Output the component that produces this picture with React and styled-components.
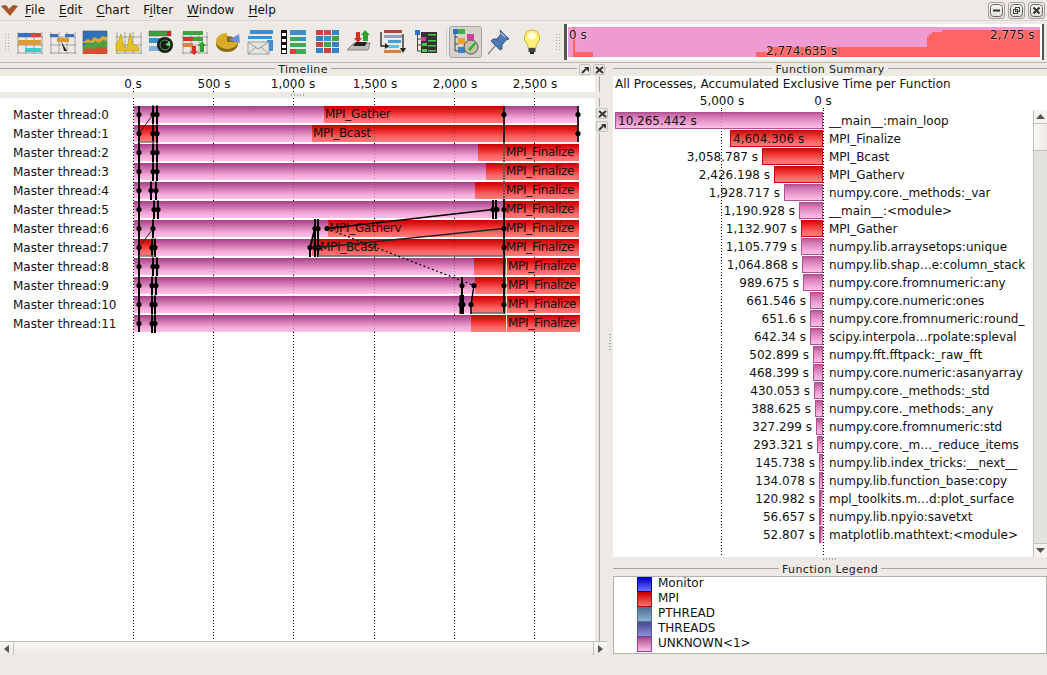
import { createGlobalStyle, styled } from "styled-components";

const Global = createGlobalStyle`
  html, body { margin: 0; padding: 0; background: #edeae5; }
  body { font-family: "DejaVu Sans", sans-serif; font-size: 12px; color: #111; }
`;

const Screen = styled.div`
  width: 1047px;
  height: 675px;
  overflow: hidden;
  display: flex;
  flex-direction: column;
  background: #edeae5;
`;

const MenuBar = styled.div`
  height: 20px;
  display: flex;
  align-items: center;
  padding-left: 1px;
  flex: none;
`;

const Logo = styled.svg`
  margin-right: 6px;
  flex: none;
`;

const MenuItem = styled.span`
  margin-right: 14px;
  font-size: 12px;
  u { text-underline-offset: 2px; }
`;

const WinButtons = styled.div`
  margin-left: auto;
  margin-right: 2px;
  display: flex;
  gap: 3px;
`;

const WinButton = styled.div`
  width: 17px;
  height: 17px;
  box-sizing: border-box;
  border: 1px solid #a5a29c;
  border-radius: 3px;
  background: linear-gradient(#f7f6f3, #e0ddd7);
  display: flex;
  align-items: center;
  justify-content: center;
`;

const ToolBar = styled.div`
  height: 43px;
  flex: none;
  display: flex;
  align-items: center;
  padding-left: 3px;
  box-sizing: border-box;
  border-top: 1px solid #dad7d1;
  border-bottom: 1px solid #b9b6b0;
`;

const Grip = styled.div`
  width: 6px;
  height: 18px;
  margin: 0 ${(p) => p.$after}px 0 ${(p) => p.$before}px;
  flex: none;
  background-image: radial-gradient(circle, #aaa 0.7px, transparent 0.8px);
  background-size: 3px 3px;
`;

const ToolSlot = styled.div`
  width: 33px;
  height: 32px;
  flex: none;
  display: flex;
  align-items: center;
  justify-content: center;
  box-sizing: border-box;
  ${(p) =>
    p.$active &&
    `background: #d6d3cd; border: 1px solid #a9a6a0; border-radius: 3px;`}
`;

const ToolDivider = styled.div`
  width: 1px;
  height: 26px;
  background: #cfccc6;
  margin: 0 2px 0 4px;
`;

const Overview = styled.div`
  width: 480px;
  height: 36px;
  margin: 0 3px 0 auto;
  box-sizing: border-box;
  background: #fff;
  border-left: 3px solid #555;
  border-right: 2px solid #555;
  padding: 3px 2px 3px 1px;
  flex: none;
`;

const OverviewInner = styled.div`
  position: relative;
  height: 100%;
  overflow: hidden;
`;

const OverviewChart = styled.svg`
  display: block;
`;

const OverviewLabel = styled.span`
  position: absolute;
  font-size: 12px;
  white-space: nowrap;
  color: #111;
  text-shadow: 0 0 2px #fff;
  left: ${(p) => p.$left}px;
  top: ${(p) => p.$top}px;
`;

const Panes = styled.div`
  flex: 1;
  display: flex;
  min-height: 0;
`;

const LeftPane = styled.div`
  width: 613px;
  flex: none;
  display: flex;
  flex-direction: column;
`;

const TitleRow = styled.div`
  height: 13px;
  flex: none;
  display: flex;
  align-items: flex-start;
  font-size: 11px;
  letter-spacing: 0.35px;
  color: #222;
  position: relative;
  margin-right: ${(p) => p.$inset || 0}px;
  &::before, &::after {
    content: "";
    flex: 1;
    border-top: 1px solid #a8a5a0;
    margin-top: 5px;
  }
  span { padding: 1px 3px 0; line-height: 12px; }
`;

const DockRow = styled.div`
  position: absolute;
  right: 1px;
  top: 1px;
  display: flex;
  gap: 2px;
  padding-left: 2px;
  background: #edeae5;
`;

const DockButton = styled.div`
  width: 12px;
  height: 11px;
  box-sizing: border-box;
  border: 1px solid #c2bfb9;
  border-radius: 2px;
  background: #edeae5;
  display: flex;
  align-items: center;
  justify-content: center;
`;

const TimelineBody = styled.div`
  height: 565px;
  flex: none;
  display: flex;
`;

const TimelineMain = styled.div`
  width: 595px;
  flex: none;
  display: flex;
  flex-direction: column;
  min-height: 0;
`;

const AxisStrip = styled.div`
  height: 16px;
  background: #fff;
  position: relative;
  flex: none;
`;

const AxisLabel = styled.span`
  position: absolute;
  top: ${(p) => p.$top ?? 1}px;
  transform: translateX(-50%);
  left: ${(p) => p.$x}px;
  white-space: nowrap;
  font-size: 12px;
`;

const AxisGap = styled.div`
  height: 6px;
  flex: none;
  display: flex;
  align-items: center;
  justify-content: center;
`;

const GripRow = styled.div`
  width: 16px;
  height: 2px;
  background-image: radial-gradient(circle, #aaa 0.6px, transparent 0.7px);
  background-size: 3px 2px;
`;

const Chart = styled.div`
  flex: 1;
  background: #fff;
  position: relative;
  min-height: 0;
`;

const ChartLines = styled.svg`
  position: absolute;
  left: 0;
  top: 0;
  pointer-events: none;
`;

const ThreadList = styled.div`
  position: absolute;
  inset: 0;
  padding-top: 8px;
  display: flex;
  flex-direction: column;
`;

const ThreadRow = styled.div`
  height: 19px;
  flex: none;
  display: flex;
`;

const ThreadName = styled.div`
  padding-left: 13px;
  width: 121px;
  flex: none;
  font-size: 12px;
  line-height: 19px;
  white-space: nowrap;
`;

const Track = styled.div`
  height: 17px;
  display: flex;
  flex: none;
`;

const Segment = styled.div`
  width: ${(p) => p.$w}px;
  flex: none;
  font-size: 12px;
  letter-spacing: -0.3px;
  line-height: 17px;
  padding-left: ${(p) => p.$pad || 0}px;
  box-sizing: border-box;
  overflow: hidden;
  white-space: nowrap;
  ${(p) => p.$split && "border-left: 1px solid #ffd8d8;"}
  background: ${(p) =>
    p.$mpi
      ? "linear-gradient(#c80000 0%, #e42020 30%, #ff6464 72%, #ff7a7a 100%)"
      : "linear-gradient(#a83f88 0%, #c76aa8 30%, #f4a8d8 72%, #ffc0e8 100%)"};
`;

const HBar = styled.div`
  width: 607px;
  height: 14px;
  flex: none;
  display: flex;
  box-sizing: border-box;
  background: linear-gradient(#f8f7f5, #edeae5);
  border-top: 1px solid #bdbdbb;
`;

const ScrollEnd = styled.div`
  width: 13px;
  flex: none;
  display: flex;
  align-items: center;
  justify-content: center;
  ${(p) =>
    p.$right
      ? "margin-left: auto; border-left: 1px solid #c4c1bb;"
      : "border-right: 1px solid #c4c1bb;"}
`;

const Rail = styled.div`
  flex: 1;
  position: relative;
  display: flex;
  flex-direction: column;
  align-items: flex-start;
  padding-left: 1px;
`;

const RailLine = styled.div`
  margin-left: 3px;
  width: 1px;
  background: #a8a5a0;
  height: ${(p) => (p.$h ? `${p.$h}px` : "auto")};
  margin-top: ${(p) => p.$gap || 0}px;
  flex: ${(p) => (p.$h ? "none" : 1)};
`;

const RailButtons = styled.div`
  display: flex;
  flex-direction: column;
  gap: 2px;
  margin-top: 1px;
`;

const RailGrip = styled.div`
  position: absolute;
  left: 14px;
  top: 257px;
  width: 2px;
  height: 17px;
  background-image: radial-gradient(circle, #aaa 0.6px, transparent 0.7px);
  background-size: 2px 3px;
`;

const RightPane = styled.div`
  flex: 1;
  display: flex;
  flex-direction: column;
  min-width: 0;
`;

const Summary = styled.div`
  height: 481px;
  flex: none;
  display: flex;
  flex-direction: column;
`;

const SummaryCaption = styled.div`
  height: 16px;
  flex: none;
  background: #fff;
  font-size: 12px;
  line-height: 16px;
  padding-left: 2px;
  white-space: nowrap;
`;

const SummaryAxis = styled.div`
  height: 18px;
  flex: none;
  background: #fff;
  position: relative;
`;

const SummaryBody = styled.div`
  flex: 1;
  display: flex;
  min-height: 0;
`;

const FuncChart = styled.div`
  flex: 1;
  background: #fff;
  position: relative;
  min-width: 0;
`;

const AxisDots = styled.div`
  position: absolute;
  left: ${(p) => p.$x}px;
  top: ${(p) => p.$top ?? 0}px;
  bottom: 0;
  width: 1px;
  opacity: ${(p) => p.$alpha ?? 1};
  background-image: linear-gradient(#000 50%, transparent 50%);
  background-size: 1px 3px;
`;

const FuncList = styled.div`
  position: absolute;
  inset: 0;
  padding-top: 2px;
  display: flex;
  flex-direction: column;
`;

const FuncRow = styled.div`
  height: 18px;
  flex: none;
  display: flex;
  align-items: flex-start;
`;

const FuncValueSide = styled.div`
  width: 210px;
  flex: none;
  display: flex;
  justify-content: flex-end;
  height: 17px;
  gap: 4px;
  white-space: nowrap;
  font-size: 12px;
  line-height: 19px;
`;

const FuncBar = styled.div`
  height: 17px;
  width: ${(p) => p.$w}px;
  box-sizing: border-box;
  flex: none;
  border: 1px solid ${(p) => (p.$mpi ? "#c80808" : "#b0508f")};
  border-width: ${(p) => (p.$w < 3 ? "0 0 0 2px" : "1px")};
  font-size: 12px;
  line-height: 17px;
  padding-left: 2px;
  overflow: hidden;
  background: ${(p) =>
    p.$mpi
      ? "linear-gradient(#d80808 0%, #ee3030 30%, #ff6a6a 75%, #ff7a7a 100%)"
      : "linear-gradient(#bb5a9c 0%, #d680b8 30%, #f4a8d8 75%, #ffc0e8 100%)"};
`;

const FuncName = styled.div`
  margin-left: 6px;
  font-size: 12px;
  line-height: 19px;
  white-space: nowrap;
`;

const VScroll = styled.div`
  width: 14px;
  flex: none;
  display: flex;
  flex-direction: column;
  background: #e4e2de;
  border-left: 1px solid #c4c1bb;
  box-sizing: border-box;
`;

const ScrollBtn = styled.div`
  height: 13px;
  flex: none;
  display: flex;
  align-items: center;
  justify-content: center;
  background: #f4f3f0;
  ${(p) =>
    p.$top
      ? "border-bottom: 1px solid #c4c1bb;"
      : "border-top: 1px solid #c4c1bb; margin-top: auto;"}
`;

const ScrollThumb = styled.div`
  height: 26px;
  flex: none;
  border-bottom: 1px solid #c4c1bb;
  background: linear-gradient(90deg, #f8f7f5, #edeae5);
`;

const SplitGap = styled.div`
  height: 6px;
  flex: none;
  display: flex;
  justify-content: center;
  align-items: flex-start;
  padding-top: 1px;
  box-sizing: border-box;
`;

const LegendBox = styled.div`
  height: 78px;
  background: #fff;
  border: 1px solid #b5b2ac;
  box-sizing: border-box;
  padding-left: 23px;
  flex: none;
`;

const LegendRow = styled.div`
  height: 15px;
  display: flex;
  font-size: 12px;
  line-height: 13px;
`;

const Swatch = styled.div`
  width: 15px;
  height: 15px;
  box-sizing: border-box;
  border: 1px solid ${(p) => p.$edge};
  background: ${(p) => p.$bg};
  margin-right: 6px;
`;

const FIN = [74, true, "MPI_Finalize", 1];
const FIN2 = [74, true, "MPI_Finalize", 1, true];

const THREADS = [
  [[190, false], [180, true, "MPI_Gather", 1], [74, false]],
  [[6, false], [16, true], [156, false], [266, true, "MPI_Bcast", 1]],
  [[344, false], [27, true], FIN],
  [[352, false], [19, true], FIN],
  [[341, false], [30, true], FIN],
  [[371, false], FIN],
  [[194, false], [177, true, "MPI_Gatherv", 1], FIN],
  [[6, false], [16, true], [156, false], [193, true, "MPI_Bcast", 8], FIN],
  [[340, false], [32, true], FIN2],
  [[341, false], [31, true], FIN2],
  [[337, false], [35, true], FIN2],
  [[337, false], [35, true], FIN2],
];

const FUNCS = [
  ["10,265.442 s", 208, false, "__main__:main_loop", true],
  ["4,604.306 s", 93, true, "MPI_Finalize", true],
  ["3,058.787 s", 61, true, "MPI_Bcast"],
  ["2,426.198 s", 49, true, "MPI_Gatherv"],
  ["1,928.717 s", 39, false, "numpy.core._methods:_var"],
  ["1,190.928 s", 24, false, "__main__:<module>"],
  ["1,132.907 s", 22, true, "MPI_Gather"],
  ["1,105.779 s", 22, false, "numpy.lib.arraysetops:unique"],
  ["1,064.868 s", 21, false, "numpy.lib.shap…e:column_stack"],
  ["989.675 s", 20, false, "numpy.core.fromnumeric:any"],
  ["661.546 s", 13, false, "numpy.core.numeric:ones"],
  ["651.6 s", 13, false, "numpy.core.fromnumeric:round_"],
  ["642.34 s", 13, false, "scipy.interpola…rpolate:spleval"],
  ["502.899 s", 10, false, "numpy.fft.fftpack:_raw_fft"],
  ["468.399 s", 10, false, "numpy.core.numeric:asanyarray"],
  ["430.053 s", 9, false, "numpy.core._methods:_std"],
  ["388.625 s", 8, false, "numpy.core._methods:_any"],
  ["327.299 s", 7, false, "numpy.core.fromnumeric:std"],
  ["293.321 s", 6, false, "numpy.core._m…_reduce_items"],
  ["145.738 s", 3, false, "numpy.lib.index_tricks:__next__"],
  ["134.078 s", 3, false, "numpy.lib.function_base:copy"],
  ["120.982 s", 2, false, "mpl_toolkits.m…d:plot_surface"],
  ["56.657 s", 2, false, "numpy.lib.npyio:savetxt"],
  ["52.807 s", 2, false, "matplotlib.mathtext:<module>"],
];

const LEGEND = [
  ["Monitor", "linear-gradient(#0000c8, #7070ff)", "#0000b0"],
  ["MPI", "linear-gradient(#d00000, #ff7070)", "#c00000"],
  ["PTHREAD", "linear-gradient(#4f7290, #8cb0d8)", "#56708c"],
  ["THREADS", "linear-gradient(#484c94, #8c90e0)", "#505490"],
  ["UNKNOWN<1>", "linear-gradient(#b0508f, #ffc0e8)", "#a83f88"],
];

// label, label centre, tick x
const AXIS = [
  ["0 s", 133, 133],
  ["500 s", 214, 213],
  ["1,000 s", 293, 293],
  ["1,500 s", 375, 374],
  ["2,000 s", 455, 454],
  ["2,500 s", 535, 534],
];

const rowY = (i) => 16.5 + i * 19;

// x of the black state lines near the start of each thread
const START_MARKS = [
  [153, 157], [153, 157], [153, 157], [153, 157], [151, 156], [154, 158],
  [153], [152, 155], [153, 157], [152, 156], [152, 155], [152, 155],
];

const Dot = ({ x, i }) => <circle cx={x} cy={rowY(i)} r="2.6" fill="#000" />;

const VLine = ({ x, i, w = 2 }) => (
  <line x1={x} y1={rowY(i) - 9} x2={x} y2={rowY(i) + 9.5} stroke="#000" strokeWidth={w} />
);

function TimelineLines() {
  return (
    <ChartLines width="595" height="545">
      {AXIS.map(([t, , x]) => (
        <line key={t} x1={x + 0.5} y1="8" x2={x + 0.5} y2="234" stroke="#000" strokeOpacity=".25" strokeDasharray="1 2" />
      ))}
      <line x1="139" y1="8" x2="139" y2="234" stroke="#000" strokeWidth="2" />
      {START_MARKS.map((xs, i) =>
        xs.map((x) => <VLine key={`${i}-${x}`} x={x} i={i} />)
      )}
      {START_MARKS.map((xs, i) => [
        <Dot key={`s${i}`} x={139} i={i} />,
        ...xs.map((x) => <Dot key={`d${i}-${x}`} x={x} i={i} />),
      ])}
      <line x1="139" y1={rowY(1)} x2="153" y2={rowY(0)} stroke="#222" strokeWidth="1" />
      <line x1="139" y1={rowY(7)} x2="153" y2={rowY(6)} stroke="#222" strokeWidth="1" />
      <line x1="139" y1="44" x2="155" y2="44" stroke="#777" strokeWidth="1.5" />
      <line x1="139" y1="158" x2="155" y2="158" stroke="#777" strokeWidth="1.5" />

      <line x1="504" y1="8" x2="504" y2="44" stroke="#222" strokeWidth="2" />
      <line x1="504" y1="44" x2="504" y2="101" stroke="#555" strokeWidth="2" strokeDasharray="2 1" />
      <line x1="504" y1="101" x2="504" y2="216" stroke="#111" strokeWidth="2" />
      <line x1="578" y1="8" x2="578" y2="44" stroke="#222" strokeWidth="2" />
      <Dot x={504} i={0} />
      <Dot x={578} i={0} />
      <Dot x={578} i={1} />

      <line x1="327" y1={rowY(6)} x2="493" y2={rowY(5)} stroke="#000" strokeWidth="1.5" />
      <Dot x={327} i={6} />
      <line x1="493" y1="102" x2="493" y2="121" stroke="#000" strokeWidth="2" />
      <line x1="496" y1="102" x2="496" y2="121" stroke="#000" strokeWidth="2" />
      <Dot x={493} i={5} />
      <Dot x={497} i={5} />
      <Dot x={504} i={5} />

      <line x1="315" y1="121" x2="315" y2="159" stroke="#000" strokeWidth="2" />
      <line x1="318" y1="121" x2="318" y2="159" stroke="#000" strokeWidth="2" />
      <line x1="310" y1="159" x2="310" y2={rowY(7)} stroke="#000" strokeWidth="2" />
      <line x1="310" y1={rowY(7)} x2="315" y2={rowY(6)} stroke="#000" strokeWidth="2" />
      <Dot x={315} i={6} />
      <Dot x={318} i={6} />
      <Dot x={310} i={7} />
      <Dot x={315} i={7} />
      <Dot x={319} i={7} />
      <line x1="318" y1={rowY(7)} x2="504" y2={rowY(6)} stroke="#222" strokeWidth="1.5" />
      <line x1="318" y1="158" x2="504" y2="158" stroke="#666" strokeWidth="1.5" />
      <Dot x={504} i={6} />
      <Dot x={504} i={7} />

      <line x1="327" y1={rowY(6)} x2="474" y2={rowY(9)} stroke="#000" strokeWidth="1.2" strokeDasharray="2 2.5" />
      <line x1="462" y1="179" x2="462" y2="197" stroke="#000" strokeWidth="2" />
      <line x1="461" y1="197" x2="461" y2="216" stroke="#000" strokeWidth="3" />
      <line x1="463" y1="197" x2="463" y2="216" stroke="#000" strokeWidth="2" />
      <line x1="471" y1={rowY(10)} x2="474" y2={rowY(9)} stroke="#000" strokeWidth="1.5" />
      <line x1="471" y1="215" x2="504" y2="215" stroke="#666" strokeWidth="1.5" />
      <line x1="471" y1={rowY(10)} x2="471" y2="216" stroke="#000" strokeWidth="1.5" />
      <Dot x={462} i={9} />
      <Dot x={474} i={9} />
      <Dot x={504} i={9} />
      <Dot x={461} i={10} />
      <Dot x={463} i={10} />
      <Dot x={471} i={10} />
      <Dot x={504} i={10} />
    </ChartLines>
  );
}

function ToolIcon({ kind }) {
  // each toolbar icon is a small hand drawn chart glyph
  const grid = (
    <path d="M2 3v22M10 3v22M18 3v22M26 3v22M1 8h26M1 16h26M1 24h26" stroke="#777" strokeWidth=".6" fill="none" />
  );
  switch (kind) {
    case "gantt":
      return (
        <svg width="27" height="26" viewBox="0 0 27 26">
          {grid}
          <rect x="2" y="4" width="14" height="4" fill="#3a6fc0" />
          <rect x="15" y="4" width="10" height="4" fill="#d84040" />
          <rect x="2" y="11" width="23" height="5" fill="#d89c38" />
          <rect x="9" y="19" width="16" height="4" fill="#40c8c8" />
        </svg>
      );
    case "cursor":
      return (
        <svg width="27" height="26" viewBox="0 0 27 26">
          {grid}
          <rect x="1" y="5" width="8" height="3" fill="#3a6fc0" />
          <rect x="16" y="5" width="9" height="3" fill="#3a6fc0" />
          <rect x="8" y="9" width="12" height="4" fill="#d89a30" />
          <path d="M12 12l6 10h-3l-1-4z" fill="#222" />
        </svg>
      );
    case "stack":
      return (
        <svg width="27" height="26" viewBox="0 0 27 26">
          <rect x="1" y="2" width="24" height="22" fill="#2f70b8" stroke="#555" strokeWidth=".6" />
          <path d="M1 13l5-3 3 2 3-4 5 2 3-3 5 1v6H1z" fill="#d8a838" />
          <path d="M1 18l5-5 4 2 3-3 4 2 4-3 4 1v11H1z" fill="#50a040" />
          <path d="M1 21l6-2 5 1 5-2 8 1v6H1z" fill="#d84f30" />
        </svg>
      );
    case "peak":
      return (
        <svg width="27" height="26" viewBox="0 0 27 26">
          {grid}
          <path d="M1 22V14l3-3 2-6 3 13 3 1 3-15 3 11 3 1 3 3v3z" fill="#e4c020" stroke="#a08810" strokeWidth=".5" />
        </svg>
      );
    case "radar":
      return (
        <svg width="27" height="26" viewBox="0 0 27 26">
          <rect x="1" y="2" width="22" height="5" fill="#40a040" stroke="#555" strokeWidth=".5" />
          <rect x="19" y="2" width="4" height="5" fill="#d82020" />
          <rect x="1" y="9" width="14" height="5" fill="#3a8fd0" />
          <rect x="1" y="17" width="12" height="5" fill="#80b0e0" />
          <circle cx="17" cy="16" r="8" fill="#1a1a1a" />
          <circle cx="17" cy="16" r="5" fill="none" stroke="#60c060" strokeWidth=".8" />
          <path d="M17 16l5-4v5z" fill="#70e070" />
        </svg>
      );
    case "updown":
      return (
        <svg width="27" height="26" viewBox="0 0 27 26">
          {grid}
          <rect x="2" y="2" width="20" height="4" fill="#40a040" />
          <rect x="2" y="8" width="12" height="4" fill="#d83030" />
          <rect x="12" y="8" width="10" height="4" fill="#40a040" />
          <rect x="2" y="14" width="10" height="4" fill="#d88040" />
          <path d="M11 17h4v5h2l-4 4-4-4h2z" fill="#d83020" />
          <path d="M21 12l4 5h-2v6h-4v-6h-2z" fill="#30a030" />
        </svg>
      );
    case "pie":
      return (
        <svg width="26" height="22" viewBox="0 0 26 22">
          <ellipse cx="12" cy="13" rx="11" ry="8" fill="#8a6a10" />
          <path d="M12 3a11 8 0 1 0 11 9l-11 0z" fill="#d8ac28" transform="translate(0 -1)" />
          <path d="M14 9l10-6 1 9z" fill="#6a8fe0" />
        </svg>
      );
    case "mail":
      return (
        <svg width="27" height="26" viewBox="0 0 27 26">
          <rect x="3" y="1" width="23" height="4" fill="#3a90d8" />
          <rect x="1" y="7" width="24" height="3" fill="#3a90d8" />
          <rect x="20" y="11" width="6" height="11" fill="#3a90d8" />
          <rect x="1" y="13" width="21" height="12" fill="#e4e4e2" stroke="#888" strokeWidth=".7" />
          <path d="M1 13l10 7 11-7M1 25l8-7M22 25l-8-7" fill="none" stroke="#888" strokeWidth=".8" />
        </svg>
      );
    case "filmgrid":
      return (
        <svg width="27" height="26" viewBox="0 0 27 26">
          <rect x="1" y="1" width="6" height="24" fill="#111" />
          <path d="M2 4h4v3H2zM2 10h4v3H2zM2 16h4v3H2zM2 21h4v3H2z" fill="#fff" />
          <rect x="10" y="1" width="16" height="5" fill="#3a90c8" />
          <rect x="10" y="8" width="10" height="4" fill="#40a858" />
          <rect x="20" y="8" width="6" height="4" fill="#3a90c8" />
          <rect x="10" y="14" width="16" height="4" fill="#40a858" />
          <rect x="10" y="20" width="6" height="5" fill="#d84040" />
          <rect x="16" y="20" width="10" height="5" fill="#40a858" />
        </svg>
      );
    case "matrix":
      return (
        <svg width="24" height="24" viewBox="0 0 24 24">
          {["#d04040", "#c05050", "#3a80c8", "#3a80c8", "#3a90c8", "#40a050", "#c04848", "#40a858", "#3a80c8", "#3a80c8", "#c84040", "#3a80c8"].map((c, i) => (
            <rect key={i} x={(i % 3) * 8 + 1} y={Math.floor(i / 3) * 6 + 0} width="7" height="5" fill={c} />
          ))}
        </svg>
      );
    case "export":
      return (
        <svg width="27" height="26" viewBox="0 0 27 26">
          <path d="M1 21l7-7h16l-2 7z" fill="#bbb" stroke="#666" strokeWidth=".7" />
          <path d="M7 17l3-4h11l-2 4z" fill="#222" />
          <path d="M10 3h4v6h2l-4 5-4-5h2z" fill="#d83020" />
          <path d="M19 1l5 5h-2v6h-5V6h-2z" fill="#30a030" />
        </svg>
      );
    case "flow":
      return (
        <svg width="27" height="26" viewBox="0 0 27 26">
          <rect x="5" y="1" width="18" height="3" fill="#b84040" />
          <rect x="5" y="6" width="18" height="3" fill="#90a0b8" />
          <rect x="9" y="11" width="13" height="3" fill="#40a0d0" />
          <rect x="8" y="16" width="12" height="3" fill="#60c0d8" />
          <rect x="5" y="21" width="17" height="3" fill="#d88040" />
          <path d="M2 3v14h5M24 5v16" fill="none" stroke="#222" strokeWidth="1.3" />
          <path d="M6 14l4 3-4 3zM21 19h6l-3 5z" fill="#222" />
        </svg>
      );
    case "tree":
      return (
        <svg width="24" height="26" viewBox="0 0 24 26">
          <rect x="1" y="1" width="5" height="5" fill="#2f70c0" />
          <path d="M3.5 6v16h4M3.5 10h4M3.5 16h4" fill="none" stroke="#444" />
          <rect x="7" y="3" width="16" height="21" fill="#333" />
          <rect x="7" y="8" width="5" height="4" fill="#d040a0" />
          <path d="M8 14h5v3H8zM8 20h5v3H8zM14 5h8v1.5h-8zM14 11h8v1.5h-8zM14 16h8v1.5h-8zM14 21h8v1.5h-8z" fill="#50c850" />
        </svg>
      );
    case "palette":
      return (
        <svg width="27" height="27" viewBox="0 0 27 27">
          <path d="M3 5v18M3 9h3M3 16h3M3 23h3" fill="none" stroke="#444" />
          <rect x="1" y="1" width="5" height="5" fill="#2f70c0" />
          <rect x="6" y="1" width="7" height="5" fill="#40b040" />
          <rect x="6" y="10" width="7" height="6" fill="#e8a030" />
          <rect x="6" y="19" width="7" height="6" fill="#3a80c8" />
          <rect x="15" y="6" width="7" height="6" fill="#d040a0" />
          <circle cx="19" cy="19" r="7" fill="#c8c0a8" stroke="#555" />
          <path d="M16 21l7-7 1 2-6 7z" fill="#30b030" />
        </svg>
      );
    case "pin":
      return (
        <svg width="24" height="26" viewBox="0 0 24 26">
          <path d="M1 25l8-9" stroke="#888" strokeWidth="1.4" />
          <path d="M13 1l9 9-3 1-4 5 0 4-2 1-9-9 2-2h4l4-5z" fill="#4f78b8" stroke="#2a4070" strokeWidth=".8" />
          <path d="M14 4l4 4" stroke="#a8c0e8" strokeWidth="1.5" />
        </svg>
      );
    case "bulb":
      return (
        <svg width="20" height="26" viewBox="0 0 20 26">
          <path d="M10 1a8 8 0 0 0-5 14c1 1 1 3 1 4h8c0-1 0-3 1-4A8 8 0 0 0 10 1z" fill="#fff07a" stroke="#c8b030" />
          <ellipse cx="10" cy="7" rx="4" ry="3.5" fill="#fffde0" />
          <rect x="6.5" y="19" width="7" height="4" fill="#444" />
          <rect x="8" y="23" width="4" height="2" fill="#222" />
        </svg>
      );
    default:
      return null;
  }
}

const TOOLS = ["gantt", "cursor", "stack", "peak", "radar", "updown", "pie", "mail", "filmgrid", "matrix", "export", "flow", "tree"];

const ArrowIcon = () => (
  <svg width="9" height="8" viewBox="0 0 9 8">
    <path d="M1 7l4-4" stroke="#333" strokeWidth="2" />
    <path d="M3 1h5v5z" fill="#333" />
  </svg>
);

const CloseIcon = () => (
  <svg width="9" height="8" viewBox="0 0 9 8">
    <path d="M1 1l7 6M8 1L1 7" stroke="#333" strokeWidth="2" />
  </svg>
);

const Tri = ({ dir }) => {
  const d = { left: "M6 0v8L1 4z", right: "M1 0v8l5-4z", up: "M0 6h9L4.5 1z", down: "M0 1h9L4.5 6z" }[dir];
  const wide = dir === "up" || dir === "down";
  return (
    <svg width={wide ? 9 : 7} height={wide ? 7 : 8}>
      <path d={d} fill="#555" />
    </svg>
  );
};

const WinFrame = ({ children }) => (
  <svg width="13" height="13">
    <rect x=".5" y=".5" width="12" height="12" rx="3" fill="none" stroke="#666" />
    {children}
  </svg>
);

export default function App() {
  return (
    <Screen>
      <Global />
      <MenuBar>
        <Logo width="18" height="14" viewBox="0 0 18 14">
          <path d="M0 3l4-1c2 0 3 3 4 4 1-1 3-4 5-4l4 1-8 10z" fill="#a5552a" />
        </Logo>
        <MenuItem><u>F</u>ile</MenuItem>
        <MenuItem><u>E</u>dit</MenuItem>
        <MenuItem><u>C</u>hart</MenuItem>
        <MenuItem>F<u>i</u>lter</MenuItem>
        <MenuItem><u>W</u>indow</MenuItem>
        <MenuItem><u>H</u>elp</MenuItem>
        <WinButtons>
          <WinButton>
            <WinFrame><path d="M3 6.5h7" stroke="#333" strokeWidth="2" /></WinFrame>
          </WinButton>
          <WinButton>
            <WinFrame>
              <rect x="3.5" y="5.5" width="4" height="4" fill="none" stroke="#444" />
              <rect x="5.5" y="3.5" width="4" height="4" fill="none" stroke="#444" />
            </WinFrame>
          </WinButton>
          <WinButton>
            <WinFrame><path d="M3.5 3.5l6 6M9.5 3.5l-6 6" stroke="#333" strokeWidth="2" /></WinFrame>
          </WinButton>
        </WinButtons>
      </MenuBar>
      <ToolBar>
        <Grip $before={1} $after={3} />
        {TOOLS.map((t) => (
          <ToolSlot key={t}><ToolIcon kind={t} /></ToolSlot>
        ))}
        <ToolDivider />
        <ToolSlot $active><ToolIcon kind="palette" /></ToolSlot>
        <ToolSlot><ToolIcon kind="pin" /></ToolSlot>
        <ToolSlot><ToolIcon kind="bulb" /></ToolSlot>
        <Grip $before={7} $after={0} />
        <Overview>
          <OverviewInner>
            <OverviewChart width="472" height="30" viewBox="0 0 472 30">
              <rect width="472" height="30" fill="#f09ad2" />
              <path d="M5 0h2v25h18v5H5z" fill="#ff6464" />
              <path d="M188 30v-5h12v-5h159V10h2V7h3V5h10V3h98v27z" fill="#ff6464" />
            </OverviewChart>
            <OverviewLabel $left={1} $top={1}>0 s</OverviewLabel>
            <OverviewLabel $left={198} $top={17}>2,774.635 s</OverviewLabel>
            <OverviewLabel $left={422} $top={1}>2,775 s</OverviewLabel>
          </OverviewInner>
        </Overview>
      </ToolBar>
      <Panes>
        <LeftPane>
          <TitleRow $inset={7}>
            <span>Timeline</span>
            <DockRow>
              <DockButton><ArrowIcon /></DockButton>
              <DockButton><CloseIcon /></DockButton>
            </DockRow>
          </TitleRow>
          <TimelineBody>
            <TimelineMain>
              <AxisStrip>
                {AXIS.map(([t, x]) => (
                  <AxisLabel key={t} $x={x}>{t}</AxisLabel>
                ))}
                {AXIS.map(([t, , tick]) => (
                  <AxisDots key={t} $x={tick} $top={12} />
                ))}
              </AxisStrip>
              <AxisGap><GripRow /></AxisGap>
              <Chart>
                {AXIS.map(([t, , tick]) => (
                  <AxisDots key={t} $x={tick} />
                ))}
                <ThreadList>
                  {THREADS.map((segs, i) => (
                    <ThreadRow key={i}>
                      <ThreadName>Master thread:{i}</ThreadName>
                      <Track>
                        {segs.map(([w, mpi, label, pad, split], j) => (
                          <Segment key={j} $w={w} $mpi={mpi} $pad={pad} $split={split}>
                            {label}
                          </Segment>
                        ))}
                      </Track>
                    </ThreadRow>
                  ))}
                </ThreadList>
                <TimelineLines />
              </Chart>
            </TimelineMain>
            <Rail>
              <RailLine $h={16} />
              <RailLine $h={9} $gap={6} />
              <RailButtons>
                <DockButton><CloseIcon /></DockButton>
                <DockButton><ArrowIcon /></DockButton>
              </RailButtons>
              <RailLine $gap={1} />
              <RailGrip />
            </Rail>
          </TimelineBody>
          <HBar>
            <ScrollEnd><Tri dir="left" /></ScrollEnd>
            <ScrollEnd $right><Tri dir="right" /></ScrollEnd>
          </HBar>
        </LeftPane>
        <RightPane>
          <TitleRow><span>Function Summary</span></TitleRow>
          <Summary>
            <SummaryCaption>All Processes, Accumulated Exclusive Time per Function</SummaryCaption>
            <SummaryAxis>
              <AxisLabel $x={109} $top={2}>5,000 s</AxisLabel>
              <AxisLabel $x={210} $top={2}>0 s</AxisLabel>
              <AxisDots $x={108} $top={16} />
              <AxisDots $x={210} $top={16} />
            </SummaryAxis>
            <SummaryBody>
              <FuncChart>
                <AxisDots $x={108} />
                <AxisDots $x={210} />
                <FuncList>
                  {FUNCS.map(([val, w, mpi, name, inside]) => (
                    <FuncRow key={name}>
                      <FuncValueSide>
                        {inside ? null : <span>{val}</span>}
                        <FuncBar $w={w} $mpi={mpi}>{inside ? val : null}</FuncBar>
                      </FuncValueSide>
                      <FuncName>{name}</FuncName>
                    </FuncRow>
                  ))}
                </FuncList>
                <AxisDots $x={108} $alpha={0.25} />
              </FuncChart>
              <VScroll>
                <ScrollBtn $top><Tri dir="up" /></ScrollBtn>
                <ScrollThumb />
                <ScrollBtn><Tri dir="down" /></ScrollBtn>
              </VScroll>
            </SummaryBody>
          </Summary>
          <SplitGap><GripRow /></SplitGap>
          <TitleRow><span>Function Legend</span></TitleRow>
          <LegendBox>
            {LEGEND.map(([name, bg, edge]) => (
              <LegendRow key={name}>
                <Swatch $bg={bg} $edge={edge} />
                {name}
              </LegendRow>
            ))}
          </LegendBox>
        </RightPane>
      </Panes>
    </Screen>
  );
}
